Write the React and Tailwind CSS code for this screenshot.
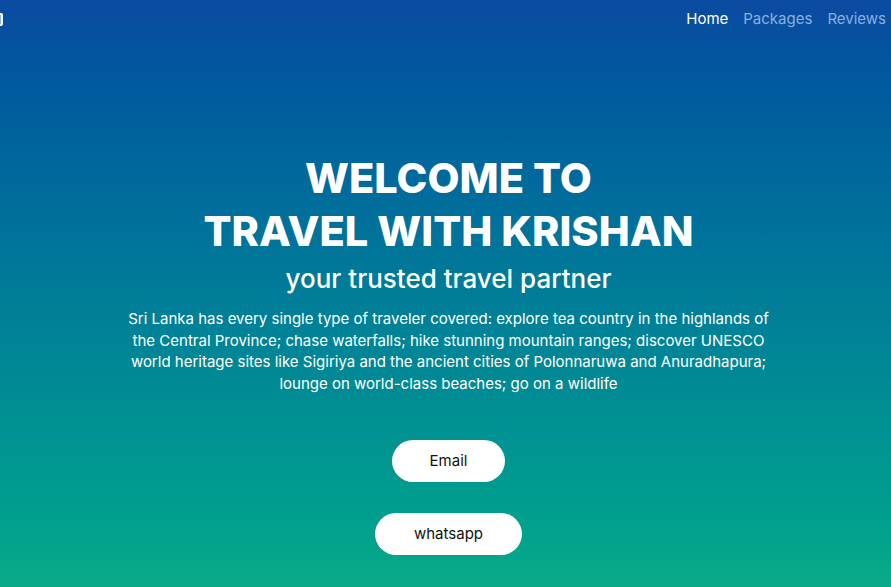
export default function App() {
  return (
    <div
      className="relative flex h-[587px] w-full flex-col overflow-hidden bg-gradient-to-b from-[#0b4aa0] to-[#0aaa89] text-white"
      style={{ fontFamily: "Inter, 'Open Sans', sans-serif" }}
    >
      <nav className="flex h-[38px] items-center justify-between">
        <div className="ml-[-10px] h-[13px] w-[13px] rounded-[2px] border-2 border-white bg-[#7fb4e6]" />
        <ul className="flex items-center gap-[15px] pr-[5px] text-[15px]">
          <li className="text-white">Home</li>
          <li className="text-[#8ab0e0]">Packages</li>
          <li className="text-[#8ab0e0]">Reviews</li>
        </ul>
      </nav>
      <main className="flex flex-col items-center pl-[6px] pt-[114px] text-center">
        <h1 className="text-[41.5px] font-extrabold leading-[53px]">
          WELCOME TO
          <br />
          TRAVEL WITH KRISHAN
        </h1>
        <h2 className="mt-[3px] text-[26px] font-medium leading-[36px]">your trusted travel partner</h2>
        <p className="mt-[11px] w-[660px] text-[15px] leading-[21.7px]">
          Sri Lanka has every single type of traveler covered: explore tea country in the highlands of the Central
          Province; chase waterfalls; hike stunning mountain ranges; discover UNESCO world heritage sites like Sigiriya
          and the ancient cities of Polonnaruwa and Anuradhapura; lounge on world-class beaches; go on a wildlife
        </p>
        <div className="mt-[45px] flex flex-col items-center gap-[31px]">
          <button className="h-[42px] w-[113px] rounded-full bg-white text-[15px] text-[#111]">Email</button>
          <button className="h-[42px] w-[147px] rounded-full bg-white text-[15px] text-[#111]">whatsapp</button>
        </div>
      </main>
    </div>
  );
}
